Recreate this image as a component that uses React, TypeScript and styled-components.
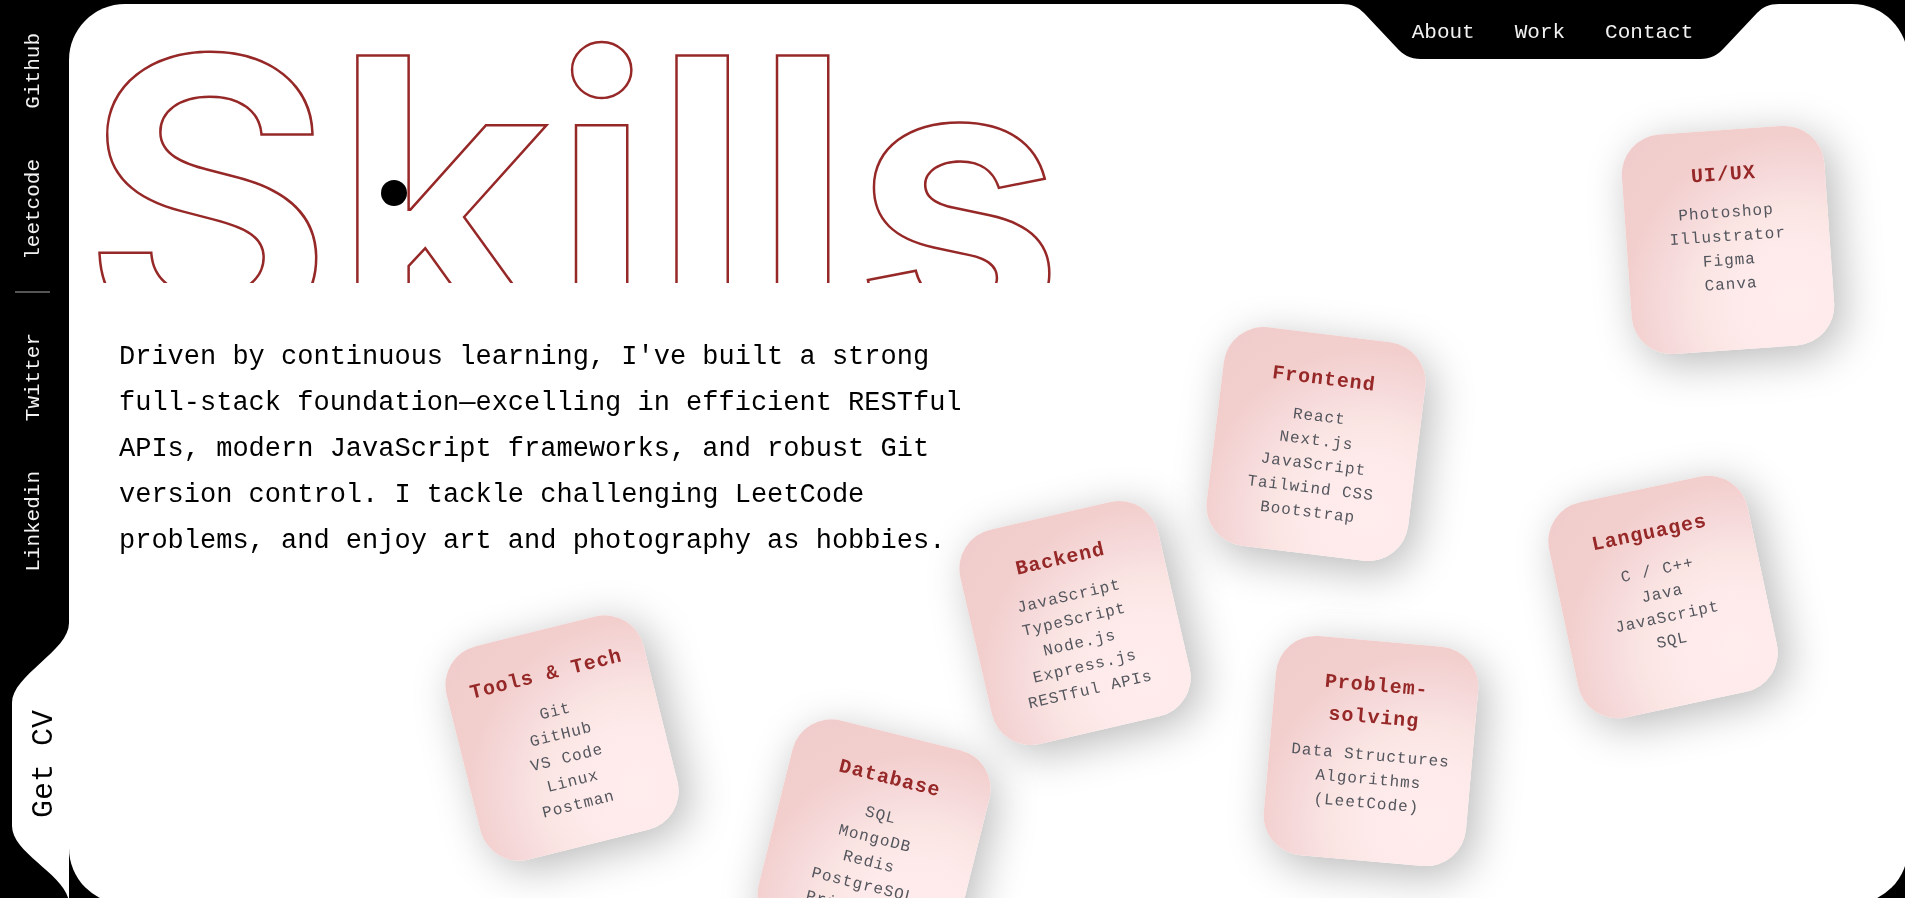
import React from "react";
import styled, { createGlobalStyle } from "styled-components";

const mono = `"Liberation Mono", "DejaVu Sans Mono", monospace`;

const GlobalStyle = createGlobalStyle`
  *, *::before, *::after { box-sizing: border-box; }
  html, body { margin: 0; padding: 0; background: #000; }
  body { height: 100vh; overflow: hidden; font-family: ${mono}; }
  a { color: inherit; text-decoration: none; }
`;

const Frame = styled.div`
  display: grid;
  grid-template-columns: 69px minmax(0, 1fr);
  height: 100vh;
  padding-top: 4px;
  background: #000;
`;

const Sidebar = styled.aside`
  display: flex;
  flex-direction: column;
  justify-content: space-between;
  min-height: 0;
`;

const Socials = styled.nav`
  display: flex;
  flex-direction: column;
  align-items: center;
  gap: 32px;
  padding: 29px 4px 0 0;
`;

const SocialGroup = styled.div`
  display: flex;
  flex-direction: column;
  align-items: center;
  gap: 50px;
  padding: 0 0 0 2px;

  & + hr + & {
    gap: 49px;
    padding-top: 8px;
  }
`;

const SideLink = styled.a`
  writing-mode: vertical-rl;
  transform: rotate(180deg);
  font-size: 21px;
  line-height: 24px;
  color: #f2f2f2;
`;

const Divider = styled.hr`
  width: 35px;
  height: 2px;
  margin: 0;
  border: 0;
  background: #555;
`;

const CvTab = styled.a`
  display: flex;
  flex-direction: column;
  margin-left: 12px;
  color: #000;
`;

const CvLabel = styled.span`
  display: flex;
  align-items: center;
  justify-content: center;
  height: 123px;
  padding-left: 6px;
  background: #fff;

  span {
    writing-mode: vertical-rl;
    transform: rotate(180deg);
    font-size: 30px;
    line-height: 36px;
    white-space: nowrap;
  }
`;

const Ear = styled.svg`
  display: block;
  flex: none;
`;

const Main = styled.main`
  position: relative;
  height: calc(100vh + 2px);
  margin-right: -3px;
  overflow: hidden;
  border-radius: 56px;
  background: #fff;
`;

const TopNav = styled.nav`
  position: absolute;
  z-index: 3;
  top: -1px;
  right: 129px;
  display: flex;
  height: 56px;
`;

const NavLinks = styled.div`
  display: flex;
  align-items: center;
  justify-content: center;
  gap: 40px;
  width: 279px;
  padding: 4px 16px 0 0;
  background: #000;
`;

const NavLink = styled.a`
  font-size: 21px;
  line-height: 24px;
  color: #f2f2f2;
`;

const TitleClip = styled.header`
  height: 279px;
  overflow: hidden;
  padding-left: 14px;
`;

const Title = styled.h1`
  margin: 0;
  font-family: Inter, Roboto, "Liberation Sans", sans-serif;
  font-size: 384px;
  font-weight: 600;
  line-height: 386px;
  white-space: nowrap;
  color: #fff;
  paint-order: stroke fill;
  -webkit-text-stroke: 5px #962828;
`;

const Intro = styled.p`
  width: 51%;
  margin: 0;
  padding: 51px 0 0 50px;
  font-size: 27px;
  line-height: 46px;
  color: #000;
`;

const CursorDot = styled.span`
  position: absolute;
  z-index: 4;
  top: 176px;
  left: 312px;
  width: 26px;
  height: 26px;
  border-radius: 50%;
  background: #fff;
  mix-blend-mode: difference;
  pointer-events: none;
`;

const Card = styled.article<{ $x: number; $y: number; $turn: number }>`
  position: absolute;
  left: ${(p) => p.$x}%;
  top: ${(p) => p.$y}px;
  width: 203px;
  height: 220px;
  padding: 29px 8px;
  border-radius: 40px;
  transform: translate(-50%, -50%) rotate(${(p) => p.$turn}deg);
  background: radial-gradient(
    circle at 80% 80%,
    #ffecec 0%,
    #feeaea 25%,
    #fae5e3 40%,
    #f6d9da 55%,
    #f2cfcd 70%,
    #f0cbcb 100%
  );
  box-shadow: 8px 10px 44px rgba(0, 0, 0, 0.28);
  text-align: center;
  letter-spacing: 1px;
`;

const CardTitle = styled.h2`
  margin: 0 0 10px;
  font-size: 20px;
  font-weight: 700;
  line-height: 32px;
  color: #962828;
`;

const CardList = styled.ul`
  margin: 0;
  padding: 0;
  list-style: none;
  font-size: 16px;
  line-height: 24px;
  color: #54565e;
`;

type Skill = { title: string; items: string[]; x: number; y: number; turn: number };

const skills: Skill[] = [
  { title: "Tools & Tech", items: ["Git", "GitHub", "VS Code", "Linux", "Postman"], x: 26.8, y: 734, turn: -14 },
  { title: "Database", items: ["SQL", "MongoDB", "Redis", "PostgreSQL", "Prisma ORM"], x: 43.8, y: 838, turn: 14 },
  { title: "Backend", items: ["JavaScript", "TypeScript", "Node.js", "Express.js", "RESTful APIs"], x: 54.7, y: 619, turn: -13 },
  { title: "Frontend", items: ["React", "Next.js", "JavaScript", "Tailwind CSS", "Bootstrap"], x: 67.8, y: 440, turn: 7 },
  { title: "Problem-solving", items: ["Data Structures", "Algorithms (LeetCode)"], x: 70.8, y: 747, turn: 5 },
  { title: "Languages", items: ["C / C++", "Java", "JavaScript", "SQL"], x: 86.7, y: 593, turn: -12 },
  { title: "UI/UX", items: ["Photoshop", "Illustrator", "Figma", "Canva"], x: 90.2, y: 236, turn: -4 },
];

export default function App() {
  return (
    <>
      <GlobalStyle />
      <Frame>
        <Sidebar>
          <Socials aria-label="Profiles">
            <SocialGroup>
              <SideLink href="#github">Github</SideLink>
              <SideLink href="#leetcode">leetcode</SideLink>
            </SocialGroup>
            <Divider />
            <SocialGroup>
              <SideLink href="#twitter">Twitter</SideLink>
              <SideLink href="#linkedin">Linkedin</SideLink>
            </SocialGroup>
          </Socials>
          <CvTab href="#cv">
            <Ear width="57" height="80" viewBox="0 0 57 80" aria-hidden="true">
              <path d="M57 0C57 28 0 52 0 80H57Z" fill="#fff" />
            </Ear>
            <CvLabel>
              <span>Get CV</span>
            </CvLabel>
            <Ear width="57" height="78" viewBox="0 0 57 78" aria-hidden="true">
              <path d="M0 0C0 28 57 50 57 78V0Z" fill="#fff" />
            </Ear>
          </CvTab>
        </Sidebar>
        <Main>
          <TopNav aria-label="Sections">
            <Ear width="79" height="56" viewBox="0 0 79 56" aria-hidden="true">
              <path d="M0 0V1C10 1 16 4 22 10L54 44C61 52 68 56 79 56V0Z" fill="#000" />
            </Ear>
            <NavLinks>
              <NavLink href="#about">About</NavLink>
              <NavLink href="#work">Work</NavLink>
              <NavLink href="#contact">Contact</NavLink>
            </NavLinks>
            <Ear width="79" height="56" viewBox="0 0 79 56" aria-hidden="true">
              <path d="M79 0V1C69 1 63 4 57 10L25 44C18 52 11 56 0 56V0Z" fill="#000" />
            </Ear>
          </TopNav>
          <TitleClip>
            <Title>Skills</Title>
          </TitleClip>
          <Intro>
            Driven by continuous learning, I've built a strong full-stack foundation—excelling in
            efficient RESTful APIs, modern JavaScript frameworks, and robust Git version control. I
            tackle challenging LeetCode problems, and enjoy art and photography as hobbies.
          </Intro>
          {skills.map((skill) => (
            <Card key={skill.title} $x={skill.x} $y={skill.y} $turn={skill.turn}>
              <CardTitle>{skill.title}</CardTitle>
              <CardList>
                {skill.items.map((item) => (
                  <li key={item}>{item}</li>
                ))}
              </CardList>
            </Card>
          ))}
          <CursorDot />
        </Main>
      </Frame>
    </>
  );
}
